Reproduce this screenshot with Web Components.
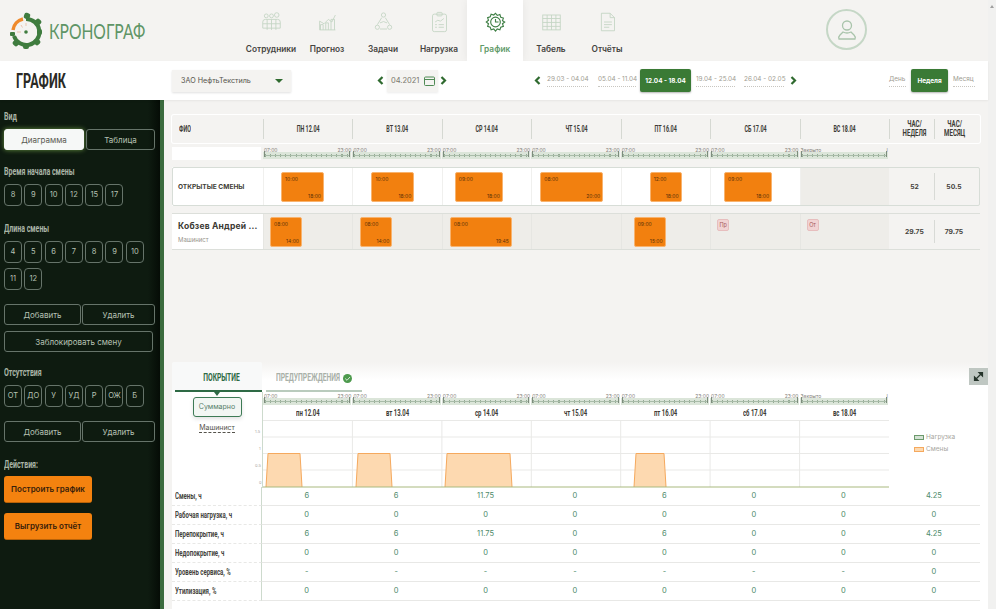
<!DOCTYPE html>
<html lang="ru">
<head>
<meta charset="utf-8">
<title>Хронограф</title>
<style>
    html, body { margin: 0; padding: 0; height: 609px; overflow: hidden; background: #f4f3f1; }
    body { font-family: Inter, Roboto, sans-serif; }
</style>
</head>
<body>
<kr-app>
    <kr-topbar slot="top"></kr-topbar>
    <kr-subbar slot="sub"></kr-subbar>
    <kr-sidebar slot="side"></kr-sidebar>
    <kr-schedule slot="main"></kr-schedule>
    <kr-coverage slot="main"></kr-coverage>
</kr-app>

<script>
    const COND = 'Roboto, sans-serif';
    const BODY = 'Inter, Roboto, sans-serif';
    const COLS = '91px repeat(7, 89.43px) 45px 46px';

    // узкий шрифт: сжимаем обычный по горизонтали
    class KrCond extends HTMLElement {
        constructor() {
            super();
            this.shadow = this.attachShadow({mode: 'open'});
            this.shadow.innerHTML = `
            <style>
                :host { display: inline-block; white-space: nowrap; transform: scaleX(var(--sx, .65)); transform-origin: center; }
                :host([left]) { transform-origin: left center; }
            </style>
            <slot></slot>`;
        }
    }

    class KrApp extends HTMLElement {
        constructor() {
            super();
            this.shadow = this.attachShadow({mode: 'open'});
            this.shadow.innerHTML = `
            <style>
                :host { display: grid; grid-template-columns: 988px 8px; width: 996px; height: 609px; overflow: hidden; }
                .page { display: flex; flex-direction: column; height: 609px; min-width: 0; }
                .body { display: flex; flex: 1; min-height: 0; }
                .main { flex: 1; display: flex; flex-direction: column; min-width: 0; }
                .scroll { background: #f1f1f0; display: flex; justify-content: center; padding-top: 5px; }
                .scroll i { width: 0; height: 0; border: 2px solid transparent; border-top: 0; border-bottom: 3px solid #a0a0a0; }
            </style>
            <div class="page">
                <slot name="top"></slot>
                <slot name="sub"></slot>
                <div class="body">
                    <slot name="side"></slot>
                    <div class="main"><slot name="main"></slot></div>
                </div>
            </div>
            <div class="scroll"><i></i></div>`;
        }
    }

    const NAV_ICONS = {
        people: `<circle cx="6" cy="5" r="2.2"/><circle cx="12" cy="5" r="2.2"/><circle cx="18" cy="4" r="2.6"/><path d="M2 19v-7q0-3 3-3h14q3 0 3 3v7z"/><path d="M7 9v12M12 9v12M17 9v12M2 14h20"/>`,
        chart: `<path d="M3 21V11l5 3 5-5 4 3 4-8"/><path d="M3 21h18"/><path d="M4 21v-6h3v6M10 21v-8h3v8M16 21V9h4v12"/>`,
        tasks: `<circle cx="12" cy="4" r="2.4"/><circle cx="5" cy="18" r="2.4"/><circle cx="19" cy="18" r="2.4"/><path d="M10 7 5 15M14 7l5 8M8 20h8"/><path d="M8 13q4-3 8 0"/>`,
        load: `<rect x="4" y="3" width="16" height="20" rx="2"/><rect x="9" y="1" width="6" height="4" rx="1"/><path d="M7 12l3-2 3 1 4-3M7 15h2M11 15h6M7 18h2M11 18h6"/>`,
        table: `<rect x="2" y="4" width="20" height="17"/><path d="M2 8h20M2 12.500h20M2 17h20M7 4v17M12 4v17M17 4v17"/>`,
        report: `<path d="M5 2h10l5 5v15H5z"/><path d="M15 2v5h5M8 12h9M8 15h9M8 18h6"/>`
    };

    class KrNavItem extends HTMLElement {
        constructor() {
            super();
            this.shadow = this.attachShadow({mode: 'open'});
        }
        connectedCallback() {
            const active = this.hasAttribute('active');
            const icon = this.getAttribute('icon');
            const gear = `<g stroke-width="1.300"><path d="M12 2l2 2.500 3-1 1 3 3 1-1 3 2.500 1.500-2.500 2 1 3-3 1-1 3-3-1-2 2.500-2-2.500-3 1-1-3-3-1 1-3L1.500 12 4 10 3 7l3-1 1-3 3 1z"/><circle cx="12" cy="12" r="5.500"/><path d="M12 8.500V12h3.500"/></g>`;
            this.shadow.innerHTML = `
            <style>
                :host { display: flex; flex-direction: column; align-items: center; width: 56px; height: 61px; box-sizing: border-box; padding-top: 11px; }
                :host([active]) { background: #fff; box-shadow: 0 0 8px rgba(0,0,0,.06); }
                svg { width: 21px; height: 22px; fill: none; stroke: ${active ? '#3f7f45' : '#c3d5c3'}; stroke-width: 1; }
                .t { margin-top: 11px; font: 600 8.300px/10px ${BODY}; color: ${active ? '#5f9a68' : '#45443f'}; white-space: nowrap; }
            </style>
            <svg viewBox="0 0 24 24">${active ? gear : NAV_ICONS[icon]}</svg>
            <div class="t"><slot></slot></div>`;
        }
    }

    class KrTopbar extends HTMLElement {
        constructor() {
            super();
            this.shadow = this.attachShadow({mode: 'open'});
            this.shadow.innerHTML = `
            <style>
                :host { display: flex; height: 61px; background: #f4f3f1; box-sizing: border-box; }
                .logo { display: flex; align-items: center; width: 243px; padding-left: 10px; box-sizing: border-box; }
                .logo svg { width: 36px; height: 38px; flex: none; }
                .name { margin-left: 3px; font: 400 21px/24px Lato, sans-serif; color: #5f9566; --sx: .745; }
                nav { display: flex; }
                .user { margin-left: 191px; margin-top: 9px; width: 41px; height: 41px; box-sizing: border-box; border: 2px solid #c5d7c6; border-radius: 50%; display: flex; align-items: center; justify-content: center; }
                .user svg { width: 20px; height: 22px; fill: none; stroke: #a9c4ab; stroke-width: 1.300; }
            </style>
            <div class="logo">
                <svg viewBox="0 0 36 38">
                    <g transform="translate(-3 0)">
                        <g fill="#3f7c3f">
                            <rect x="17" y="1" width="6" height="6" rx="2" transform="rotate(20 20 4)"/>
                            <rect x="28" y="7" width="6" height="6" rx="2" transform="rotate(45 31 10)"/>
                            <rect x="30" y="17" width="5" height="6" rx="2"/>
                            <rect x="27" y="27" width="6" height="6" rx="2" transform="rotate(-45 30 30)"/>
                            <rect x="16" y="31" width="6" height="6" rx="2"/>
                            <rect x="6" y="28" width="6" height="6" rx="2" transform="rotate(45 9 31)"/>
                            <rect x="3" y="20" width="5" height="4" rx="1"/>
                        </g>
                        <path d="M7 24A13 13 0 1 0 19 7" fill="none" stroke="#3f7c3f" stroke-width="4"/>
                        <path d="M6 18A13 13 0 0 1 16 7" fill="none" stroke="#ef8a2c" stroke-width="3.500"/>
                        <circle cx="19" cy="20" r="1.800" fill="#3f7c3f"/>
                        <path d="M10 20h4M14 13l1.500 2.500M19 11v3" stroke="#e8b9a0" stroke-width=".8"/>
                    </g>
                </svg>
                <kr-cond left class="name">КРОНОГРАФ</kr-cond>
            </div>
            <nav>
                <kr-nav-item icon="people">Сотрудники</kr-nav-item>
                <kr-nav-item icon="chart">Прогноз</kr-nav-item>
                <kr-nav-item icon="tasks">Задачи</kr-nav-item>
                <kr-nav-item icon="load">Нагрузка</kr-nav-item>
                <kr-nav-item active>График</kr-nav-item>
                <kr-nav-item icon="table">Табель</kr-nav-item>
                <kr-nav-item icon="report">Отчёты</kr-nav-item>
            </nav>
            <div class="user">
                <svg viewBox="0 0 20 22"><circle cx="10" cy="6.500" r="4.500"/><path d="M2 20q-1-2 1-4l3-3q4 2 8 0l3 3q2 2 1 4z"/></svg>
            </div>`;
        }
    }

    class KrChevron extends HTMLElement {
        constructor() {
            super();
            this.shadow = this.attachShadow({mode: 'open'});
            const left = this.hasAttribute('left');
            this.shadow.innerHTML = `
            <style>
                :host { display: inline-flex; width: 7px; height: 9px; flex: none; }
                svg { width: 7px; height: 9px; fill: none; stroke: #2f6a2f; stroke-width: 2.200; }
            </style>
            <svg viewBox="0 0 7 9"><path d="${left ? 'M5.500 1 2 4.500 5.500 8' : 'M1.500 1 5 4.500 1.500 8'}"/></svg>`;
        }
    }

    class KrPeriod extends HTMLElement {
        constructor() {
            super();
            this.shadow = this.attachShadow({mode: 'open'});
            this.shadow.innerHTML = `
            <style>
                :host { display: inline-block; font: 400 6.400px/10px ${BODY}; color: #a09c92; white-space: nowrap; padding-bottom: 2px; border-bottom: 1px dotted #c8c6c0; }
                :host([on]) { background: #3a7a35; color: #fff; font-weight: 700; border: 0; padding: 0; border-radius: 2px; display: flex; align-items: center; justify-content: center; height: 23px; box-shadow: 0 1px 2px rgba(0,0,0,.3); }
            </style>
            <slot></slot>`;
        }
    }

    class KrSubbar extends HTMLElement {
        constructor() {
            super();
            this.shadow = this.attachShadow({mode: 'open'});
            this.shadow.innerHTML = `
            <style>
                :host { display: flex; align-items: center; height: 39px; background: #fff; box-shadow: 0 1px 2px rgba(0,0,0,.06); position: relative; z-index: 1; box-sizing: border-box; }
                h1 { margin: 0 0 0 16px; width: 156px; font: 700 21px/24px ${COND}; color: #2a2a26; --sx: .6; }
                .firm { width: 119px; height: 22px; box-sizing: border-box; background: #f4f3f1; box-shadow: 0 1px 2px rgba(0,0,0,.12); display: flex; align-items: center; justify-content: space-between; padding: 0 8px 0 9px; font: 400 7.200px/10px ${BODY}; color: #55534c; }
                .firm i { width: 0; height: 0; border: 4px solid transparent; border-bottom: 0; border-top: 4px solid #2f6a2f; }
                .month { display: flex; align-items: center; margin-left: 86px; }
                .box { width: 51px; height: 22px; margin: 0 2px 0 3px; box-sizing: border-box; background: #f4f3f1; box-shadow: 0 1px 2px rgba(0,0,0,.08); display: flex; align-items: center; justify-content: space-between; padding: 0 3px 0 4px; font: 400 7.500px/10px ${BODY}; color: #7a776e; }
                .box svg { width: 11px; height: 10px; fill: none; stroke: #4f8a55; }
                .weeks { display: flex; align-items: center; margin-left: 87px; }
                .modes { display: flex; align-items: center; margin-left: 92px; }
            </style>
            <h1><kr-cond left>ГРАФИК</kr-cond></h1>
            <div class="firm">ЗАО НефтьТекстиль<i></i></div>
            <div class="month">
                <kr-chevron left></kr-chevron>
                <div class="box">04.2021<svg viewBox="0 0 11 10"><rect x=".5" y="1" width="10" height="8.500" rx="1"/><path d="M.5 3.500h10"/></svg></div>
                <kr-chevron></kr-chevron>
            </div>
            <div class="weeks">
                <kr-chevron left style="margin-right:6px"></kr-chevron>
                <kr-period style="width:41px">29.03 - 04.04</kr-period>
                <kr-period style="width:38px;margin-left:10px">05.04 - 11.04</kr-period>
                <kr-period on style="width:51px;margin-left:4px">12.04 - 18.04</kr-period>
                <kr-period style="width:39px;margin-left:5px">19.04 - 25.04</kr-period>
                <kr-period style="width:40px;margin-left:9px">26.04 - 02.05</kr-period>
                <kr-chevron style="margin-left:6px"></kr-chevron>
            </div>
            <div class="modes">
                <kr-period style="width:17px">День</kr-period>
                <kr-period on style="width:37px;margin-left:5px">Неделя</kr-period>
                <kr-period style="width:22px;margin-left:5px">Месяц</kr-period>
            </div>`;
        }
    }

    class KrBtn extends HTMLElement {
        constructor() {
            super();
            this.shadow = this.attachShadow({mode: 'open'});
            this.shadow.innerHTML = `
            <style>
                :host { display: flex; align-items: center; justify-content: center; box-sizing: border-box; height: 21px; border: 1px solid #66746a; border-radius: 3px; color: #b7c2b4; font: 400 8px/10px ${BODY}; white-space: nowrap; }
                :host([chip]) { width: 18px; height: 22px; border-radius: 4px; margin-right: 2.300px; font-size: 7.500px; }
                :host([sel]) { background: #f6f8f7; color: #5a5a52; border-color: #f6f8f7; box-shadow: 0 0 5px rgba(150,210,90,.65); }
                :host([action]) { height: 27px; width: 88px; background: #f4820f; border: 0; border-bottom: 1px solid #b86208; color: #38200a; font-weight: 600; }
            </style>
            <slot></slot>`;
        }
    }

    class KrSidebar extends HTMLElement {
        constructor() {
            super();
            this.shadow = this.attachShadow({mode: 'open'});
            const chips = (list) => list.map(t => `<kr-btn chip>${t}</kr-btn>`).join('');
            const label = (t, top) => `<div class="l" style="margin-top:${top}px"><kr-cond left>${t}</kr-cond></div>`;
            this.shadow.innerHTML = `
            <style>
                :host { display: block; width: 164px; flex: none; height: 509px; box-sizing: border-box; padding: 11px 0 0 4px; background: linear-gradient(90deg, #0e1b10 0, #0e1b10 148px, #050c06 160px, #3b6b3e 160px, #3b6b3e 164px); }
                .l { font: 700 10px/11px ${COND}; color: #a9b4a6; height: 11px; --sx: .7; }
                .row { display: flex; flex-wrap: wrap; width: 156px; }
                .row kr-btn[chip] { margin-bottom: 5px; }
                .pair { display: flex; gap: 1px; }
            </style>
            ${label('Вид', 0)}
            <div class="pair" style="margin-top:7px">
                <kr-btn sel style="width:80px">Диаграмма</kr-btn>
                <kr-btn style="width:69px;margin-left:1px">Таблица</kr-btn>
            </div>
            ${label('Время начала смены', 16)}
            <div class="row" style="margin-top:7px">${chips([8, 9, 10, 12, 15, 17])}</div>
            ${label('Длина смены', 12)}
            <div class="row" style="margin-top:7px">${chips([4, 5, 6, 7, 8, 9, 10, 11, 12])}</div>
            <div class="pair" style="margin-top:9px">
                <kr-btn style="width:77px">Добавить</kr-btn>
                <kr-btn style="width:73px">Удалить</kr-btn>
            </div>
            <kr-btn style="width:149px;margin-top:6px">Заблокировать смену</kr-btn>
            ${label('Отсутствия', 15)}
            <div class="row" style="margin-top:7px">${chips(['ОТ', 'ДО', 'У', 'УД', 'Р', 'ОЖ', 'Б'])}</div>
            <div class="pair" style="margin-top:9px">
                <kr-btn style="width:77px">Добавить</kr-btn>
                <kr-btn style="width:73px">Удалить</kr-btn>
            </div>
            ${label('Действия:', 17)}
            <kr-btn action style="margin-top:6px">Построить график</kr-btn>
            <kr-btn action style="margin-top:10px">Выгрузить отчёт</kr-btn>`;
        }
    }

    // полоска часов над днями
    class KrTimeline extends HTMLElement {
        constructor() {
            super();
            this.shadow = this.attachShadow({mode: 'open'});
        }
        connectedCallback() {
            const from = this.getAttribute('from') || '07:00';
            const to = this.getAttribute('to') === null ? '23:00' : this.getAttribute('to');
            this.shadow.innerHTML = `
            <style>
                :host { display: block; height: 13px; }
                .lb { display: flex; justify-content: space-between; font: 400 5px/6px ${BODY}; color: #85827a; height: 5px; padding: 0 1px; white-space: nowrap; }
                .bar { position: relative; margin: 0 1px 0 0; height: 7px; background: #dbe5d9; }
                .ticks { position: absolute; left: 2px; right: 2px; top: 2px; height: 3px; background:
                    linear-gradient(#a9bca9, #a9bca9) 0 1px / 100% 1px no-repeat,
                    repeating-linear-gradient(90deg, #94aa94 0 1px, transparent 1px 5.100px); }
                .cap { position: absolute; top: -1px; width: 1px; height: 6px; background: #7d8c7d; }
            </style>
            <div class="lb"><span>${from}</span><span>${to}</span></div>
            <div class="bar"><div class="ticks"></div><div class="cap" style="left:1px"></div><div class="cap" style="right:1px"></div></div>`;
        }
    }

    class KrShift extends HTMLElement {
        constructor() {
            super();
            this.shadow = this.attachShadow({mode: 'open'});
        }
        connectedCallback() {
            this.shadow.innerHTML = `
            <style>
                :host { display: flex; flex-direction: column; justify-content: space-between; box-sizing: border-box; height: 30px; padding: 3px 2px 2px 3px; background: #f2800f; border: 1px solid #f8b36e; border-radius: 2px; font: 400 5px/6px ${BODY}; color: #5a3008; flex: none; }
                .e { text-align: right; }
            </style>
            <div>${this.getAttribute('from')}</div>
            <div class="e">${this.getAttribute('to')}</div>`;
        }
    }

    class KrSchedule extends HTMLElement {
        constructor() {
            super();
            this.shadow = this.attachShadow({mode: 'open'});
            const days = ['ПН 12.04', 'ВТ 13.04', 'СР 14.04', 'ЧТ 15.04', 'ПТ 16.04', 'СБ 17.04', 'ВС 18.04'];
            const shift = (l, w, a, b) => `<div class="d"><kr-shift from="${a}" to="${b}" style="margin-left:${l - 1}px;width:${w}px"></kr-shift></div>`;
            this.shadow.innerHTML = `
            <style>
                :host { display: block; height: 262px; padding: 15px 0 0 8px; box-sizing: border-box; }
                .g { display: grid; grid-template-columns: ${COLS}; width: 808px; box-sizing: border-box; }
                .head { height: 28px; background: #f4f3f1; box-shadow: 0 0 0 1px #fff; border-radius: 2px; align-items: center; font: 700 9px/9px ${COND}; color: #3c3b35; --sx: .6; }
                .head > div { height: 20px; display: flex; align-items: center; justify-content: center; text-align: center; border-left: 1px solid #d5d8d2; box-sizing: border-box; }
                .head > div:first-child { border: 0; justify-content: flex-start; padding-left: 7px; }
                .head > div.w { font-size: 8.500px; --sx: .72; padding-left: 5px; }
                .head > div.m { font-size: 8.500px; --sx: .72; padding-right: 6px; }
                .strip { margin-top: 4px; height: 13px; }
                .strip .blank { background: #fff; margin-right: 2px; }
                .row { margin-top: 7px; height: 39px; outline: 1px solid #d7ddd7; outline-offset: -1px; border-radius: 2px; }
                .row2 { height: 37px; margin-top: 7px; border-width: 1px 0; border-style: solid; border-color: #dcdfda; }
                .d { display: flex; align-items: center; background: #fff; border-left: 1px solid #f0f0ee; box-sizing: border-box; }
                .row2 .d { background: #eeede9; border-left-color: #e6e6e2; align-items: flex-start; padding-top: 3px; }
                .d.off { background: #eeede9; }
                .name { background: #fff; padding-left: 6px; display: flex; flex-direction: column; justify-content: center; box-sizing: border-box; }
                .open { font: 700 6.600px/10px ${BODY}; color: #3f3e38; }
                .fio { font: 700 8.500px/12px ${BODY}; color: #3a3933; white-space: nowrap; letter-spacing: .2px; }
                .pos { font: 400 6px/8px ${BODY}; color: #98958c; margin-top: 4px; }
                .h { display: flex; align-items: center; justify-content: center; font: 700 6.800px/10px ${BODY}; color: #45443d; position: relative; padding-left: 6px; }
                .h.sep { padding: 0 6px 0 0; }
                .h.sep::before { content: ""; position: absolute; left: 0; top: 6px; bottom: 6px; width: 1px; background: #d8dad6; }
                .badge { margin: 2px 0 0 6px; width: 12px; height: 12px; box-sizing: border-box; background: #f1d3d3; border: 1px solid #e7bebe; border-radius: 2px; font: 400 5.500px/10px ${BODY}; color: #a85a5a; text-align: center; }
            </style>
            <div class="g head">
                <div><kr-cond left>ФИО</kr-cond></div>${days.map(d => `<div><kr-cond>${d}</kr-cond></div>`).join('')}
                <div class="w"><kr-cond>ЧАС/<br>НЕДЕЛЯ</kr-cond></div><div class="m"><kr-cond>ЧАС/<br>МЕСЯЦ</kr-cond></div>
            </div>
            <div class="g strip">
                <div class="blank"></div>
                <kr-timeline></kr-timeline><kr-timeline></kr-timeline><kr-timeline></kr-timeline><kr-timeline></kr-timeline>
                <kr-timeline></kr-timeline><kr-timeline></kr-timeline><kr-timeline from="Закрыто" to="I"></kr-timeline>
            </div>
            <div class="g row">
                <div class="name"><div class="open">ОТКРЫТЫЕ СМЕНЫ</div></div>
                ${shift(18, 43, '10:00', '18:00')}${shift(19, 43, '10:00', '18:00')}${shift(13, 48, '09:00', '18:00')}
                ${shift(9, 63, '08:00', '20:00')}${shift(29, 32, '12:00', '18:00')}${shift(14, 48, '09:00', '18:00')}
                <div class="d off"></div>
                <div class="h">52</div><div class="h sep">50.5</div>
            </div>
            <div class="g row2">
                <div class="name"><div class="fio">Кобзев Андрей ...</div><div class="pos">Машинист</div></div>
                ${shift(7, 32, '08:00', '14:00')}${shift(8, 32, '08:00', '14:00')}${shift(8, 62, '08:00', '19:45')}
                <div class="d"></div>
                ${shift(13, 32, '09:00', '15:00')}
                <div class="d"><div class="badge">Пр</div></div>
                <div class="d"><div class="badge">От</div></div>
                <div class="h">29.75</div><div class="h sep">79.75</div>
            </div>`;
        }
    }

    class KrCoverage extends HTMLElement {
        constructor() {
            super();
            this.shadow = this.attachShadow({mode: 'open'});
            const days = ['пн 12.04', 'вт 13.04', 'ср 14.04', 'чт 15.04', 'пт 16.04', 'сб 17.04', 'вс 18.04'];
            const rows = [
                ['Смены, ч', 6, 6, 11.75, 0, 6, 0, 0, 4.25],
                ['Рабочая нагрузка, ч', 0, 0, 0, 0, 0, 0, 0, 0],
                ['Перепокрытие, ч', 6, 6, 11.75, 0, 6, 0, 0, 4.25],
                ['Недопокрытие, ч', 0, 0, 0, 0, 0, 0, 0, 0],
                ['Уровень сервиса, %', '-', '-', '-', '-', '-', '-', '-', 0],
                ['Утилизация, %', 0, 0, 0, 0, 0, 0, 0, 0]
            ];
            // трапеции смен на графике
            const trap = (a, b) => `<path d="M${a} 67 L${a + 2} 33.500 H${b - 2} L${b} 67" fill="#fdd9b0" stroke="#f5a95e" stroke-width="1"/>`;
            const seps = [89.4, 178.9, 268.3, 357.7, 447.1, 536.6];
            this.shadow.innerHTML = `
            <style>
                :host { display: block; height: 247px; margin-left: 8px; position: relative; background: linear-gradient(#f4f3f1 0, #fff 18px); }
                .tabs { display: flex; height: 30px; }
                .tab { position: relative; box-sizing: border-box; height: 30px; font: 700 10.500px/32px ${COND}; text-align: center; --sx: .64; }
                .t1 { width: 90px; padding-left: 9px; background: #f8f9f9; color: #2e6a45; border-bottom: 2px solid #2e6a45; border-radius: 2px 2px 0 0; }
                .t1::before { content: ""; position: absolute; left: 0; bottom: -2px; width: 3px; height: 2px; background: #fff; }
                .t1::after { content: ""; position: absolute; left: 50%; bottom: -6px; margin-left: -3px; border: 3px solid transparent; border-top: 4px solid #2e6a45; border-bottom: 0; }
                .t2 { margin-left: 4px; width: 96px; color: #a9b0a8; line-height: 12px; border-bottom: 2px solid #b9cbbd; display: flex; align-items: center; justify-content: flex-start; padding: 4px 0 0 10px; gap: 2px; }
                .t2 .w { width: 65px; flex: none; text-align: left; }
                .ok { width: 9px; height: 9px; border-radius: 50%; background: #4d9a4d; flex: none; }
                .ok svg { display: block; width: 9px; height: 9px; fill: none; stroke: #d9ead9; stroke-width: 1; }
                .exp { position: absolute; right: 0; top: 6px; width: 19px; height: 17px; background: #bfc7c2; display: flex; align-items: center; justify-content: center; }
                .exp svg { width: 11px; height: 11px; fill: none; stroke: #25332a; stroke-width: 1.200; }
                .top { display: grid; grid-template-columns: 90px 627px 1fr; height: 95px; }
                .left { display: flex; flex-direction: column; align-items: center; padding: 5px 0 0 0; box-sizing: border-box; }
                .sum { width: 49px; height: 20px; box-sizing: border-box; border: 1.500px solid #3d7a55; border-radius: 3px; background: #f2f6f3; box-shadow: 0 2px 4px rgba(0,0,0,.12); font: 400 7px/17px ${BODY}; color: #55806a; text-align: center; }
                .mach { margin-top: 6px; font: 400 7px/9px ${BODY}; color: #55534c; border-bottom: 1px dashed #55534c; }
                .chart { border-left: 1px solid #cddacd; position: relative; }
                .strip { display: grid; grid-template-columns: repeat(7, 89.43px); height: 13px; margin-top: 1px; }
                .dn { display: grid; grid-template-columns: repeat(7, 89.43px); height: 13px; font: 700 9px/13px ${COND}; color: #3c3b35; text-align: center; margin-top: 1px; --sx: .66; }
                .plot { display: block; width: 627px; height: 68px; overflow: visible; }
                .axis { position: absolute; left: -8px; top: 0; font: 400 4px/5px ${BODY}; color: #a8a69f; }
                .leg { padding: 40px 0 0 25px; font: 400 6.500px/11.500px ${BODY}; color: #a8a69e; }
                .leg div { display: flex; align-items: center; gap: 2px; }
                .leg i { width: 10px; height: 5px; box-sizing: border-box; display: block; }
                .g { display: grid; grid-template-columns: 90px repeat(7, 89.43px) 92px; width: 808px; height: 19px; }
                .g > div { box-sizing: border-box; border-bottom: 1px solid #e8e8e6; font: 400 7.500px/18px ${BODY}; color: #4d8a6a; text-align: center; }
                .g > .lab { border-bottom: 1px dashed #e8e8e6; border-right: 1px solid #cddacd; text-align: left; padding-left: 3px; font: 700 8.500px/18px ${COND}; color: #45443d; --sx: .71; }
            </style>
            <div class="tabs">
                <div class="tab t1"><kr-cond>ПОКРЫТИЕ</kr-cond></div>
                <div class="tab t2"><span class="w"><kr-cond left>ПРЕДУПРЕЖДЕНИЯ</kr-cond></span><span class="ok"><svg viewBox="0 0 9 9"><path d="M2.200 4.500 4 6.300 7 3"/></svg></span></div>
            </div>
            <div class="exp"><svg viewBox="0 0 11 11"><path d="M2 9 9 2"/><path d="M6 1.500h3.500V5zM1.500 6V9.500H5z" fill="#25332a"/></svg></div>
            <div class="top">
                <div class="left">
                    <div class="sum">Суммарно</div>
                    <div class="mach">Машинист</div>
                </div>
                <div class="chart">
                    <div class="strip">
                        <kr-timeline></kr-timeline><kr-timeline></kr-timeline><kr-timeline></kr-timeline><kr-timeline></kr-timeline>
                        <kr-timeline></kr-timeline><kr-timeline></kr-timeline><kr-timeline from="Закрыто" to="I"></kr-timeline>
                    </div>
                    <div class="dn">${days.map(d => `<div><kr-cond>${d}</kr-cond></div>`).join('')}</div>
                    <svg class="plot" viewBox="0 0 627 68">
                        <g stroke="#e9e9e7" stroke-width="1">
                            <path d="M0 .5H626M0 17H626M0 33.500H626M0 50H626"/>
                            ${seps.map(x => `<path d="M${x} 0V67"/>`).join('')}
                        </g>
                        ${trap(3, 39)}${trap(93, 129)}${trap(182, 249)}${trap(371, 403)}
                        <path d="M0 67H626" stroke="#a9b97f" stroke-width="1"/>
                    </svg>
                    <div class="axis" style="top:37px">1.5</div>
                    <div class="axis" style="top:54px;left:-4px">1</div>
                    <div class="axis" style="top:71px">0.5</div>
                    <div class="axis" style="top:88px;left:-4px">0</div>
                </div>
                <div class="leg">
                    <div><i style="background:#d5e2d5;border:1px solid #6c9a6c"></i>Нагрузка</div>
                    <div><i style="background:#fdd9b0;border:1px solid #f5a95e"></i>Смены</div>
                </div>
            </div>
            ${rows.map(r => `<div class="g"><div class="lab"><kr-cond left>${r[0]}</kr-cond></div>${r.slice(1).map(v => `<div>${v}</div>`).join('')}</div>`).join('')}`;
        }
    }

    customElements.define('kr-cond', KrCond);
    customElements.define('kr-app', KrApp);
    customElements.define('kr-nav-item', KrNavItem);
    customElements.define('kr-topbar', KrTopbar);
    customElements.define('kr-chevron', KrChevron);
    customElements.define('kr-period', KrPeriod);
    customElements.define('kr-subbar', KrSubbar);
    customElements.define('kr-btn', KrBtn);
    customElements.define('kr-sidebar', KrSidebar);
    customElements.define('kr-timeline', KrTimeline);
    customElements.define('kr-shift', KrShift);
    customElements.define('kr-schedule', KrSchedule);
    customElements.define('kr-coverage', KrCoverage);
</script>
</body>
</html>
